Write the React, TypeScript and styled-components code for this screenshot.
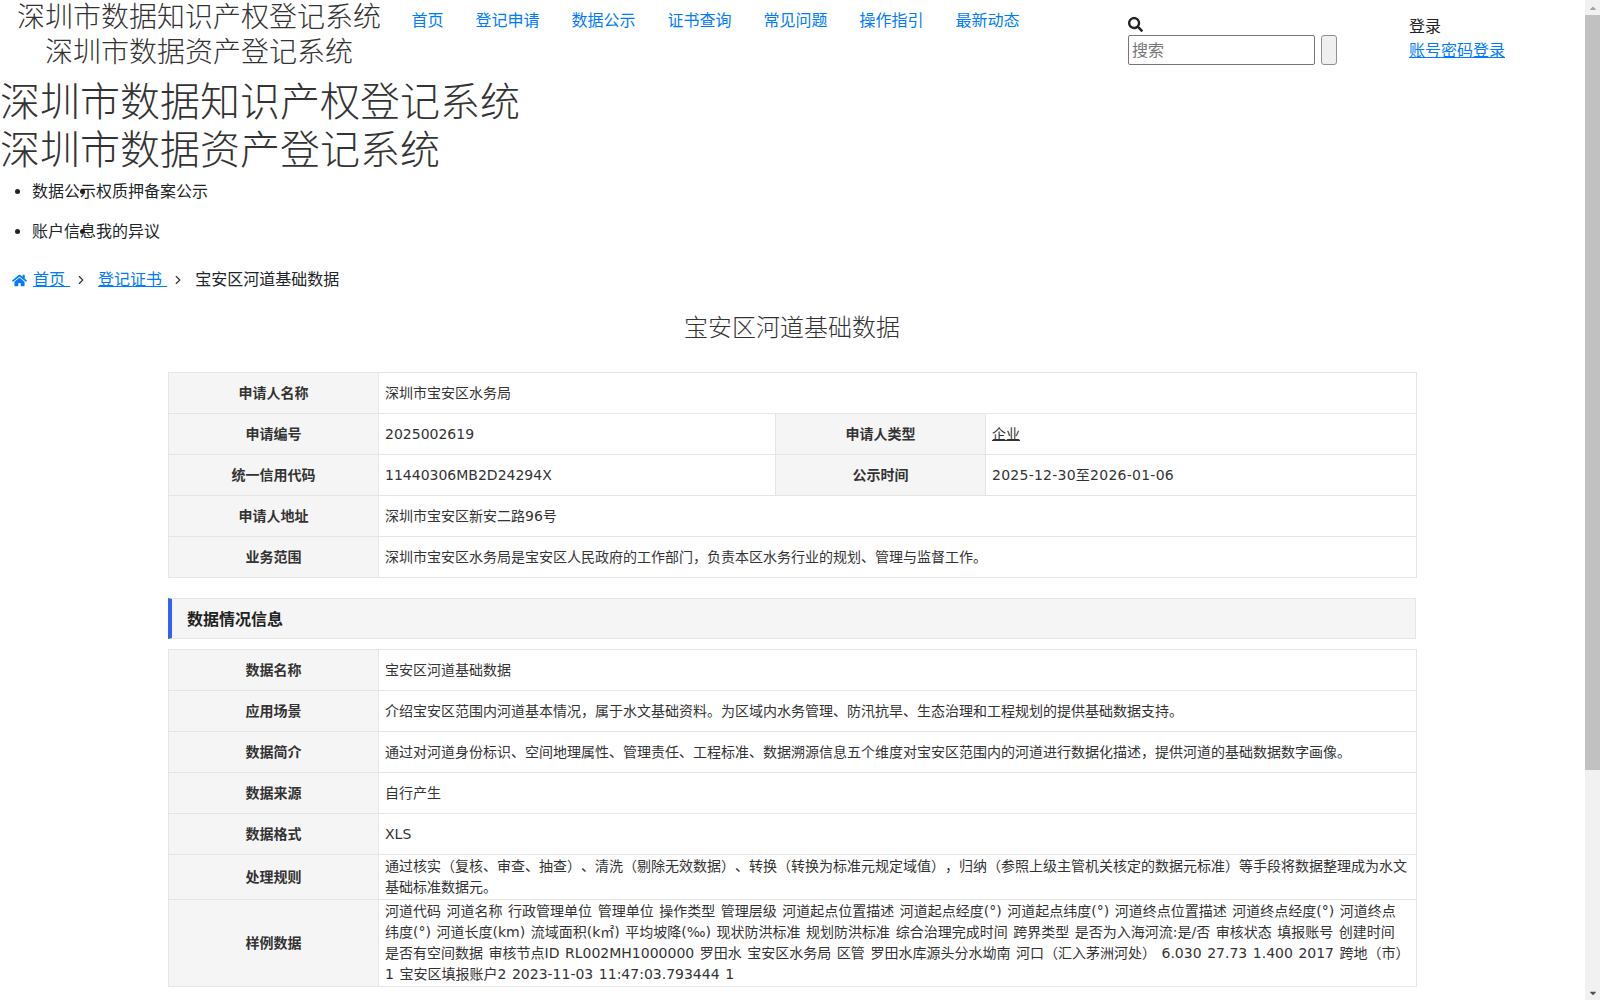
import { createGlobalStyle } from "styled-components";
import styled from "styled-components";
import { FaCaretDown, FaCaretUp, FaHome, FaSearch } from "react-icons/fa";
import { FiChevronRight } from "react-icons/fi";

const GlobalStyle = createGlobalStyle`
  body {
    margin: 0;
    background: #fff;
    color: #212529;
    font-family: "DejaVu Sans", "Noto Sans CJK SC", sans-serif;
    font-size: 16px;
    line-height: 1.5;
    text-spacing-trim: space-all;
  }
  a {
    color: #007bff;
  }
`;

const Page = styled.div`
  width: 1585px;
  min-height: 1000px;
`;

const ScrollTrack = styled.div`
  position: fixed;
  top: 0;
  right: 0;
  bottom: 0;
  display: flex;
  flex-direction: column;
  align-items: center;
  width: 15px;
  background: #f1f1f1;
  font-size: 10px;
`;

const ScrollArrow = styled.div<{ $down?: boolean }>`
  display: flex;
  align-items: center;
  justify-content: center;
  flex: none;
  height: 15px;
  color: ${({ $down }) => ($down ? "#505050" : "#a3a3a3")};
`;

const ScrollThumb = styled.div`
  flex: none;
  width: 100%;
  height: 755px;
  background: #c1c1c1;
`;

const ScrollRest = styled.div`
  flex: 1;
`;

const TopBar = styled.header`
  display: flex;
  align-items: flex-start;
  height: 78px;
  padding-left: 17px;
`;

const Brand = styled.div`
  width: 364px;
  font-size: 28px;
  font-weight: 300;
  line-height: 35px;
  text-align: center;
  white-space: nowrap;
  color: #333;
`;

const Nav = styled.nav`
  display: flex;
  gap: 32px;
  width: 716.5px;
  margin-left: 30.5px;
  padding-top: 9px;
`;

const NavLink = styled.a`
  line-height: 24px;
  text-decoration: none;
`;

const SearchBox = styled.form`
  width: 281px;
  padding-top: 14px;
`;

const SearchIcon = styled.div`
  display: flex;
  align-items: center;
  height: 21px;
  font-size: 15px;
  color: #222;
`;

const SearchRow = styled.div`
  display: flex;
  gap: 6px;
`;

const SearchInput = styled.input`
  box-sizing: border-box;
  width: 187px;
  height: 30px;
  padding: 0 3px;
  border: 1px solid #767676;
  border-radius: 2px;
  font: inherit;
  &::placeholder {
    color: #757575;
  }
`;

const SearchButton = styled.button`
  box-sizing: border-box;
  width: 16px;
  height: 30px;
  padding: 0;
  border: 1px solid #8f8f8f;
  border-radius: 3px;
  background: #efefef;
`;

const LoginBox = styled.div`
  padding-top: 15px;
  color: #222;
  line-height: 24px;
`;

const LoginLink = styled.a`
  display: block;
`;

const BigTitle = styled.h1`
  margin: 0;
  font-size: 40px;
  font-weight: 300;
  line-height: 48px;
  color: #333;
`;

const MenuList = styled.ul`
  margin: -2px 0 0;
  padding: 0 0 0 32px;
  list-style: none;
`;

const MenuRow = styled.li`
  display: flex;
  height: 40px;
  align-items: center;
  position: relative;
  line-height: 24px;
  &::before {
    content: "";
    position: absolute;
    left: -17px;
    top: 17px;
    width: 5px;
    height: 5px;
    border-radius: 50%;
    background: #222;
  }
`;

const MenuItem = styled.span`
  position: relative;
  & + &::before {
    content: "";
    position: absolute;
    left: -16px;
    top: 9px;
    width: 5px;
    height: 5px;
    border-radius: 50%;
    background: #222;
  }
`;

const Crumbs = styled.div`
  display: flex;
  align-items: center;
  height: 24px;
  margin-top: 16px;
  padding-left: 12px;
`;

const CrumbLink = styled.a`
  display: flex;
  align-items: center;
  white-space: pre;
  svg {
    width: 15px;
    height: 15px;
    margin-right: 6px;
  }
`;

const CrumbSep = styled.span`
  display: flex;
  width: 28px;
  padding-left: 4px;
  box-sizing: border-box;
  font-size: 14px;
  color: #333;
`;

const Container = styled.main`
  width: 1248px;
  margin-left: 168px;
  color: #333;
`;

const PageTitle = styled.h2`
  margin: 19px 0 27px;
  font-size: 24px;
  font-weight: 300;
  line-height: 34px;
  text-align: center;
`;

const InfoTable = styled.table`
  width: 100%;
  table-layout: fixed;
  border-collapse: collapse;
  font-size: 14px;
  line-height: 21px;
`;

const Label = styled.th`
  box-sizing: border-box;
  height: 41px;
  padding: 1px 6px;
  border: 1px solid #e5e5e5;
  background: #f5f5f5;
  font-weight: 700;
  text-align: center;
`;

const Value = styled.td<{ $spaced?: boolean }>`
  box-sizing: border-box;
  height: 41px;
  padding: 1px 0 1px 6px;
  border: 1px solid #e5e5e5;
  white-space: pre-line;
  word-spacing: 1.1px;
  letter-spacing: ${({ $spaced }) => ($spaced ? "0.25px" : "normal")};
`;

const SectionHead = styled.div`
  box-sizing: border-box;
  height: 41px;
  margin: 20px 0 10px;
  padding-left: 15px;
  border: 1px solid #e5e5e5;
  border-left: 4px solid #2f62f5;
  background: #f5f5f5;
  font-size: 16px;
  font-weight: 700;
  line-height: 41px;
  color: #222;
`;

const LinkText = styled.span`
  text-decoration: underline;
`;

const ColGroup = ({ four }: { four?: boolean }) => (
  <colgroup>
    <col width={210} />
    <col width={four ? 397 : 1038} />
    {four && <col width={210} />}
    {four && <col width={431} />}
  </colgroup>
);

const dataRows = [
  ["数据名称", "宝安区河道基础数据"],
  ["应用场景", "介绍宝安区范围内河道基本情况，属于水文基础资料。为区域内水务管理、防汛抗旱、生态治理和工程规划的提供基础数据支持。"],
  ["数据简介", "通过对河道身份标识、空间地理属性、管理责任、工程标准、数据溯源信息五个维度对宝安区范围内的河道进行数据化描述，提供河道的基础数据数字画像。"],
  ["数据来源", "自行产生"],
  ["数据格式", "XLS"],
  ["处理规则", "通过核实（复核、审查、抽查）、清洗（剔除无效数据）、转换（转换为标准元规定域值），归纳（参照上级主管机关核定的数据元标准）等手段将数据整理成为水文\n基础标准数据元。"],
  ["样例数据", "河道代码 河道名称 行政管理单位 管理单位 操作类型 管理层级 河道起点位置描述 河道起点经度(°) 河道起点纬度(°) 河道终点位置描述 河道终点经度(°) 河道终点\n纬度(°) 河道长度(km) 流域面积(k㎡) 平均坡降(‰) 现状防洪标准 规划防洪标准 综合治理完成时间 跨界类型 是否为入海河流:是/否 审核状态 填报账号 创建时间\n是否有空间数据 审核节点ID RL002MH1000000 罗田水 宝安区水务局 区管 罗田水库源头分水坳南 河口（汇入茅洲河处） 6.030 27.73 1.400 2017 跨地（市）\n1 宝安区填报账户2 2023-11-03 11:47:03.793444 1"],
];

const App = () => {
  return (
    <Page>
      <GlobalStyle />
      <TopBar>
        <Brand>
          深圳市数据知识产权登记系统
          <br />
          深圳市数据资产登记系统
        </Brand>
        <Nav>
          {["首页", "登记申请", "数据公示", "证书查询", "常见问题", "操作指引", "最新动态"].map((item) => (
            <NavLink href="#" key={item}>
              {item}
            </NavLink>
          ))}
        </Nav>
        <SearchBox>
          <SearchIcon>
            <FaSearch />
          </SearchIcon>
          <SearchRow>
            <SearchInput placeholder="搜索" />
            <SearchButton type="button" />
          </SearchRow>
        </SearchBox>
        <LoginBox>
          登录
          <LoginLink href="#">账号密码登录</LoginLink>
        </LoginBox>
      </TopBar>

      <BigTitle>
        深圳市数据知识产权登记系统
        <br />
        深圳市数据资产登记系统
      </BigTitle>

      <MenuList>
        <MenuRow>
          <MenuItem>数据公示</MenuItem>
          <MenuItem>权质押备案公示</MenuItem>
        </MenuRow>
        <MenuRow>
          <MenuItem>账户信息</MenuItem>
          <MenuItem>我的异议</MenuItem>
        </MenuRow>
      </MenuList>

      <Crumbs>
        <CrumbLink href="#">
          <FaHome />
          {"首页 "}
        </CrumbLink>
        <CrumbSep>
          <FiChevronRight />
        </CrumbSep>
        <CrumbLink href="#">{"登记证书 "}</CrumbLink>
        <CrumbSep>
          <FiChevronRight />
        </CrumbSep>
        <span>宝安区河道基础数据</span>
      </Crumbs>

      <Container>
        <PageTitle>宝安区河道基础数据</PageTitle>
        <InfoTable>
          <ColGroup four />
          <tbody>
            <tr>
              <Label>申请人名称</Label>
              <Value colSpan={3}>深圳市宝安区水务局</Value>
            </tr>
            <tr>
              <Label>申请编号</Label>
              <Value>2025002619</Value>
              <Label>申请人类型</Label>
              <Value>
                <LinkText>企业</LinkText>
              </Value>
            </tr>
            <tr>
              <Label>统一信用代码</Label>
              <Value>11440306MB2D24294X</Value>
              <Label>公示时间</Label>
              <Value $spaced>2025-12-30至2026-01-06</Value>
            </tr>
            <tr>
              <Label>申请人地址</Label>
              <Value colSpan={3}>深圳市宝安区新安二路96号</Value>
            </tr>
            <tr>
              <Label>业务范围</Label>
              <Value colSpan={3}>深圳市宝安区水务局是宝安区人民政府的工作部门，负责本区水务行业的规划、管理与监督工作。</Value>
            </tr>
          </tbody>
        </InfoTable>

        <SectionHead>数据情况信息</SectionHead>

        <InfoTable>
          <ColGroup />
          <tbody>
            {dataRows.map(([label, value]) => (
              <tr key={label}>
                <Label>{label}</Label>
                <Value>{value}</Value>
              </tr>
            ))}
          </tbody>
        </InfoTable>
      </Container>

      <ScrollTrack>
        <ScrollArrow>
          <FaCaretUp />
        </ScrollArrow>
        <ScrollThumb />
        <ScrollRest />
        <ScrollArrow $down>
          <FaCaretDown />
        </ScrollArrow>
      </ScrollTrack>
    </Page>
  );
};

export default App;
